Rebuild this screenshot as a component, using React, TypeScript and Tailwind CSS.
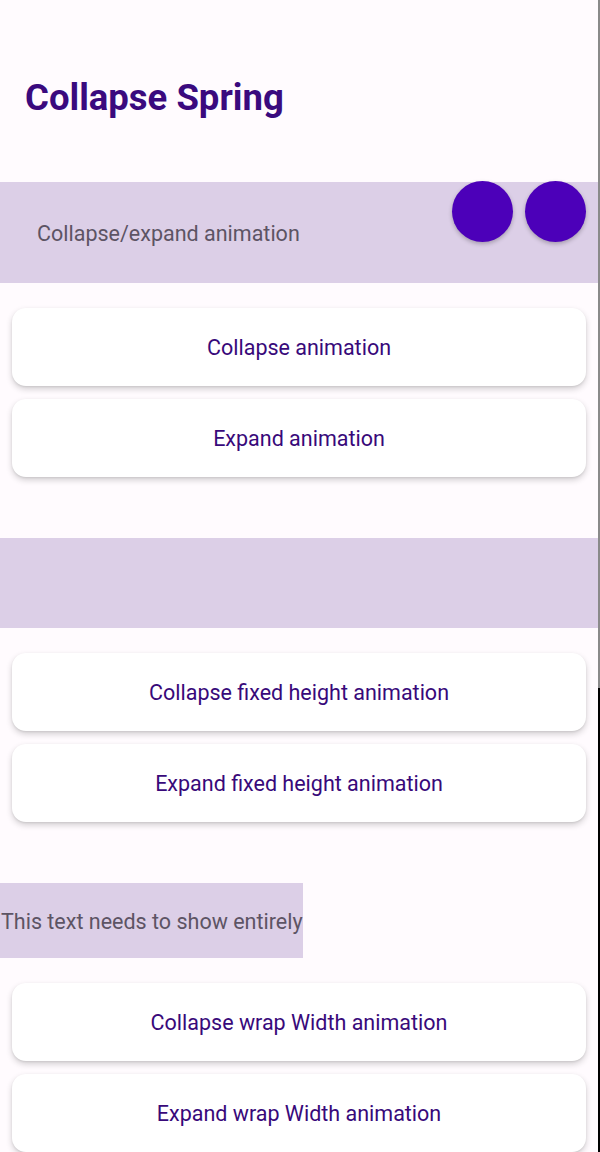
const sections = [
  {
    key: 'spring',
    band: 'full',
    buttons: ['Collapse animation', 'Expand animation'],
  },
  {
    key: 'fixed',
    band: 'empty',
    buttons: ['Collapse fixed height animation', 'Expand fixed height animation'],
  },
  {
    key: 'wrap',
    band: 'wrap',
    buttons: ['Collapse wrap Width animation', 'Expand wrap Width animation'],
  },
];

const ActionButton = ({ label }: { label: string }) => (
  <button className="mx-[12px] h-[78px] shrink-0 rounded-[14px] bg-white pt-[3px] text-[21.5px] text-[#38097a] shadow-[0_3px_6px_rgba(0,0,0,0.18),0_1px_2px_rgba(0,0,0,0.08)]">
    {label}
  </button>
);

const Band = ({ kind }: { kind: string }) => {
  if (kind === 'full') {
    return (
      <div className="relative flex h-[101px] shrink-0 items-center bg-[#dccfe7] pl-[37px]">
        <p className="mt-[3px] text-[21.5px] text-[#5d5464]">Collapse/expand animation</p>
        <div className="absolute right-[12px] top-[-1px] flex gap-[12px]">
          <div className="h-[61px] w-[61px] rounded-full bg-[#4c00b9] shadow-[0_2px_4px_rgba(0,0,0,0.25)]" />
          <div className="h-[61px] w-[61px] rounded-full bg-[#4c00b9] shadow-[0_2px_4px_rgba(0,0,0,0.25)]" />
        </div>
      </div>
    );
  }
  if (kind === 'empty') {
    return <div className="h-[90px] shrink-0 bg-[#dccfe7]" />;
  }
  return (
    <div className="flex h-[75px] w-fit shrink-0 items-center bg-[#dccfe7] pl-[1px]">
      <p className="mt-[3px] text-[21.5px] text-[#5d5464]">This text needs to show entirely</p>
    </div>
  );
};

export default function App() {
  return (
    <div
      className="flex h-[1152px] w-[600px] overflow-hidden bg-[#fffbfe]"
      style={{ fontFamily: 'Roboto, "Noto Sans", sans-serif' }}
    >
      <div className="flex w-[598px] shrink-0 flex-col">
        <div className="flex h-[182px] shrink-0 items-start pl-[25px] pt-[76px]">
          <h1 className="text-[36.5px] font-bold leading-[44px] text-[#3a0a7e]">Collapse Spring</h1>
        </div>
        {sections.map((s, i) => (
          <div key={s.key} className={i === 0 ? 'flex shrink-0 flex-col' : 'mt-[61px] flex shrink-0 flex-col'}>
            <Band kind={s.band} />
            <div className="mt-[25px] flex shrink-0 flex-col gap-[13px]">
              {s.buttons.map((b) => (
                <ActionButton key={b} label={b} />
              ))}
            </div>
          </div>
        ))}
      </div>
      <div className="flex w-[2px] shrink-0 flex-col">
        <div className="h-[688px] bg-[#8a8a8a]" />
        <div className="flex-1 bg-black" />
      </div>
    </div>
  );
}
